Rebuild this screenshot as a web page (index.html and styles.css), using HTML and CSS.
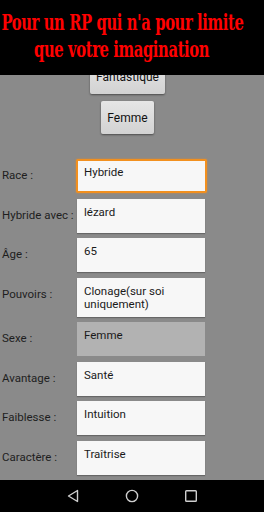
FILE: index.html
```
<!DOCTYPE html>
<html lang="fr">
<head>
  <meta charset="UTF-8">
  <meta name="viewport" content="width=device-width, initial-scale=1.0">
  <title>Fiche RP</title>
  <link rel="stylesheet" href="styles.css">
</head>
<body>
  <div class="screen">
    <header class="banner">
      <h1 class="slogan">
        <span class="line">Pour un RP qui n'a pour limite</span>
        <span class="line">que votre imagination</span>
      </h1>
    </header>

    <main class="sheet">
      <div class="choices">
        <button class="choice choice-wide">Fantastique</button>
        <button class="choice">Femme</button>
      </div>

      <div class="fields">
        <div class="row">
          <label class="label">Race :</label>
          <div class="field focused">Hybride</div>
        </div>
        <div class="row">
          <label class="label">Hybride avec :</label>
          <div class="field">lézard</div>
        </div>
        <div class="row">
          <label class="label">Âge :</label>
          <div class="field">65</div>
        </div>
        <div class="row">
          <label class="label">Pouvoirs :</label>
          <div class="field tall">Clonage(sur soi uniquement)</div>
        </div>
        <div class="row">
          <label class="label">Sexe :</label>
          <div class="field disabled">Femme</div>
        </div>
        <div class="row">
          <label class="label">Avantage :</label>
          <div class="field">Santé</div>
        </div>
        <div class="row">
          <label class="label">Faiblesse :</label>
          <div class="field">Intuition</div>
        </div>
        <div class="row">
          <label class="label">Caractère :</label>
          <div class="field">Traîtrise</div>
        </div>
      </div>
    </main>

    <nav class="navbar">
      <svg class="nav-icon" width="14" height="14" viewBox="0 0 14 14">
        <path d="M11.5 1.5 L2.5 7 L11.5 12.5 Z" fill="none" stroke="#cfcfcf" stroke-width="1.4" stroke-linejoin="round"/>
      </svg>
      <svg class="nav-icon" width="14" height="14" viewBox="0 0 14 14">
        <circle cx="7" cy="7" r="5.6" fill="none" stroke="#cfcfcf" stroke-width="1.4"/>
      </svg>
      <svg class="nav-icon" width="14" height="14" viewBox="0 0 14 14">
        <rect x="1.7" y="1.7" width="10.6" height="10.6" rx="0.8" fill="none" stroke="#cfcfcf" stroke-width="1.4"/>
      </svg>
    </nav>
  </div>
</body>
</html>
```

FILE: styles.css
```
* { box-sizing: border-box; }
html, body { margin: 0; padding: 0; }
body { background: #8a8a8a; font-family: Roboto, "Noto Sans", sans-serif; color: #1b1b1b; }

.screen { position: relative; height: 512px; display: flex; flex-direction: column; overflow: hidden; }

/* black banner lies over the scrolled form */
.banner { position: absolute; top: 0; left: 0; right: 0; height: 75px; background: #000; z-index: 2; }
.slogan { margin: 0; padding: 9px 20px 0 0; display: flex; flex-direction: column; align-items: center; font-family: "DejaVu Serif", serif; font-stretch: condensed; font-weight: bold; font-size: 22px; line-height: 27px; color: #f00; }
.slogan .line { display: block; white-space: nowrap; transform: scaleX(0.745); letter-spacing: -0.5px; }

.sheet { flex: 1; overflow: hidden; padding: 60px 0 0 2px; }

.choices { display: flex; flex-direction: column; align-items: center; gap: 7px; padding-right: 11px; }
.choice { height: 34px; padding: 0 6px; border: none; border-radius: 2px; background: linear-gradient(#e6e6e6, #d2d2d2); box-shadow: 0 1px 2px rgba(0,0,0,0.45); font-family: Roboto, sans-serif; font-size: 12px; color: #111; }
.choice:last-child { height: 33px; }

.fields { margin-top: 25px; display: flex; flex-direction: column; gap: 5.5px; }
.row { display: flex; align-items: flex-start; }
.label { width: 75px; padding-top: 9px; font-size: 11.5px; color: #1e1e1e; white-space: nowrap; }
.field { width: 128px; height: 34px; padding: 7px 7px 0; background: #f7f7f7; box-shadow: 0 1px 1px rgba(0,0,0,0.25); font-size: 11.5px; line-height: 13px; color: #1a1a1a; }
.field.tall { height: 39px; }
.field.disabled { background: #b2b2b2; box-shadow: none; }
.field.focused { width: 131px; margin-left: -1px; border: 2px solid #f2901f; border-radius: 2px; padding: 5px 6px 0; box-shadow: 0 0 2px rgba(240,140,30,0.8); }

.navbar { height: 32px; flex-shrink: 0; background: #000; display: flex; justify-content: center; align-items: center; gap: 45px; padding-right: 1px; }
.nav-icon { display: block; }
```
